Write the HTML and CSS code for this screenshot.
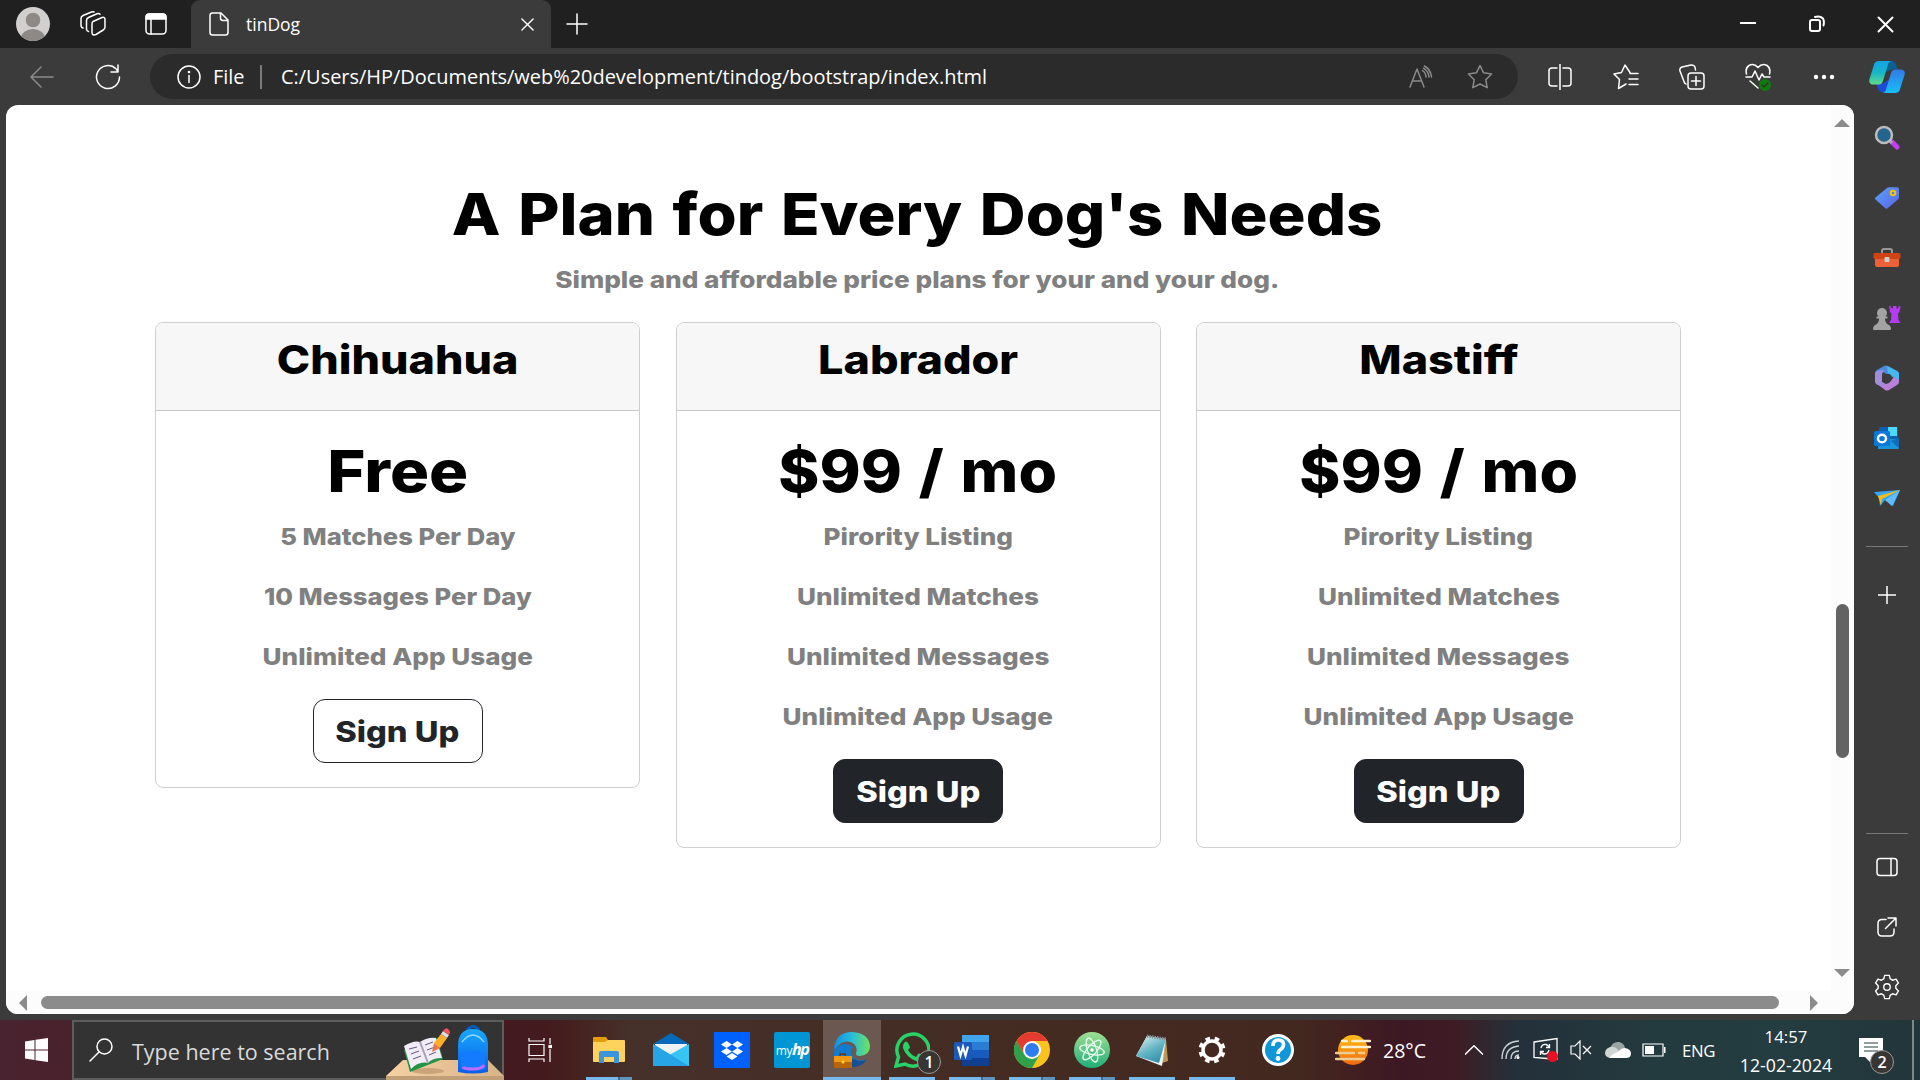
FILE: index.html
```html
<!DOCTYPE html>
<html lang="en">
<head>
<meta charset="utf-8">
<title>tinDog</title>
<link rel="stylesheet" href="styles.css">
</head>
<body>
<div class="desktop">
  <header class="tabstrip">
    <div class="cell profile"><svg width="34" height="34" viewBox="0 0 34 34"><defs><clipPath id="av"><circle cx="17" cy="17" r="17"/></clipPath></defs><circle cx="17" cy="17" r="17" fill="#d2d0ce"/><g fill="#8c8986" clip-path="url(#av)"><circle cx="17" cy="13" r="7.3"/><ellipse cx="17" cy="31" rx="12" ry="9"/></g></svg></div>
    <div class="cell spaces"><svg class="line" width="26" height="26" viewBox="0 0 26 26"><path d="M13 10.500 22 6.500q3 -.8 3 2V16q0 2-1.800 3L16 23.500q-4 1.500-4-2V13q0-2 1-2.500z"/><path d="M8.500 20.500q-2-.5-2-2.500V9.500q0-2 2-3L17 2.800q2-.6 3 .5"/><path d="M3 17q-2-.5-2-3V7.500q0-2 2-3L11.500 1q1.500-.5 2.500 0"/></svg></div>
    <div class="cell tabmenu"><svg class="line" width="22" height="22" viewBox="0 0 22 22"><rect x="1" y="1" width="20" height="20" rx="3.500"/><path d="M1 6V4q0-3 3-3h14q3 0 3 3v2z" fill="#fff"/><path d="M6 6v15"/></svg></div>
    <div class="tab">
      <svg class="line" width="20" height="24" viewBox="0 0 20 24"><path d="M3 1h9l7 7v12.500q0 2.500-2.500 2.500h-13Q1 23 1 20.500V3.500Q1 1 3.500 1M11.500 1v5q0 2.500 2.500 2.500h5"/></svg>
      <span class="tab-title">tinDog</span>
      <svg class="line" width="13" height="13" viewBox="0 0 14 14"><path d="M1 1l12 12M13 1 1 13"/></svg>
    </div>
    <div class="cell newtab"><svg class="line" width="22" height="22" viewBox="0 0 22 22"><path d="M11 1v20M1 11h20"/></svg></div>
    <div class="window-controls">
      <div class="cell"><svg width="16" height="16"><path d="M0 7h16" stroke="#fff" stroke-width="2"/></svg></div>
      <div class="cell"><svg class="line bold" width="16" height="18" viewBox="0 0 16 18"><rect x="1" y="5" width="10" height="11" rx="2"/><path d="M6 2q5-1.500 8 1.500 1.500 2.500.5 7"/></svg></div>
      <div class="cell"><svg class="line bold" width="17" height="17" viewBox="0 0 17 17"><path d="M1.500 1.500l14 14M15.500 1.500l-14 14"/></svg></div>
    </div>
  </header>

  <div class="browser">
    <div class="main">
      <nav class="toolbar">
        <div class="cell back"><svg class="line dim" width="24" height="22" viewBox="0 0 24 22"><path d="M23 11H1M11 1 1 11l10 10"/></svg></div>
        <div class="cell reload"><svg class="line" width="26" height="26" viewBox="0 0 26 26"><path d="M24.500 13A11.500 11.500 0 1 1 21 4.800L22.500 7M23 1v7h-7"/></svg></div>
        <div class="address">
          <svg class="line" width="24" height="24" viewBox="0 0 24 24"><circle cx="12" cy="12" r="11"/><path d="M12 10.500v7"/><circle cx="12" cy="7" r=".6"/></svg>
          <span class="scheme">File</span>
          <span class="url">C:/Users/HP/Documents/web%20development/tindog/bootstrap/index.html</span>
          <svg class="line dim read" width="24" height="23" viewBox="0 0 24 23"><path d="M1 22 8 4 15 22M3.500 16h9M13.500 5.500q3.500 2.500 3.500 6.500M15.500 1q6.500 4 7 11M14.500 3.200q5 3.300 5.500 8.800"/></svg>
          <svg class="line dim" width="26" height="26" viewBox="0 0 26 26"><path d="M13 1.500l3.600 7.300 8 1.200-5.800 5.700 1.400 8L13 20l-7.200 3.700 1.400-8L1.400 10l8-1.200z"/></svg>
        </div>
        <div class="tools">
          <div class="cell"><svg class="line" width="24" height="26" viewBox="0 0 24 26"><path d="M9 4H4Q1 4 1 7v12q0 3 3 3h5M15 4h5q3 0 3 3v12q0 3-3 3h-5M12 0v26"/></svg></div>
          <div class="cell"><svg class="line" width="26" height="26" viewBox="0 0 26 26"><path d="M17 8.500 12 1 8.500 8.500 1 10l5.500 5.500-1 9L13 20M17 9.500h8M16 15h9M16 20.500h9"/></svg></div>
          <div class="cell"><svg class="line" width="26" height="26" viewBox="0 0 26 26"><rect x="9" y="9" width="16" height="16" rx="3"/><path d="M17 12.500v9M12.500 17h9M7 20q-1.500-.5-2-2.500L1 7q-.8-3 2-4l9-2q3-.5 4 2l.5 3"/></svg></div>
          <div class="cell"><svg class="line" width="26" height="28" viewBox="0 0 26 28"><path d="M1.500 11Q0 5 4 2.500 9 0 13 4.500 17 0 22 2.500 26 5 24.500 11M1 14h6l3-6 4 9 3-6 2 3h6M5 18l8 7"/><circle cx="20" cy="22" r="6" fill="#0f7b0f" stroke="none"/><path d="M17 22l2 2 4-4" stroke="#29391f"/></svg></div>
          <div class="cell"><svg width="22" height="6" fill="#fff"><circle cx="3" cy="3" r="2.200"/><circle cx="11" cy="3" r="2.200"/><circle cx="19" cy="3" r="2.200"/></svg></div>
        </div>
      </nav>

      <div class="viewport">
        <div class="page">
          <section class="pricing">
            <h1><span>A Plan for Every Dog's Needs</span></h1>
            <p class="lead"><span>Simple and affordable price plans for your and your dog.</span></p>
            <div class="plans">
              <article class="card limited">
                <h2><span>Chihuahua</span></h2>
                <div class="card-body">
                  <h3><span>Free</span></h3>
                  <p><span>5 Matches Per Day</span></p>
                  <p><span>10 Messages Per Day</span></p>
                  <p><span class="wide">Unlimited App Usage</span></p>
                  <button class="outline"><span>Sign Up</span></button>
                </div>
              </article>
              <article class="card">
                <h2><span>Labrador</span></h2>
                <div class="card-body">
                  <h3><span>$99 / mo</span></h3>
                  <p><span>Pirority Listing</span></p>
                  <p><span>Unlimited Matches</span></p>
                  <p><span>Unlimited Messages</span></p>
                  <p><span>Unlimited App Usage</span></p>
                  <button><span>Sign Up</span></button>
                </div>
              </article>
              <article class="card">
                <h2><span>Mastiff</span></h2>
                <div class="card-body">
                  <h3><span>$99 / mo</span></h3>
                  <p><span>Pirority Listing</span></p>
                  <p><span>Unlimited Matches</span></p>
                  <p><span>Unlimited Messages</span></p>
                  <p><span>Unlimited App Usage</span></p>
                  <button><span>Sign Up</span></button>
                </div>
              </article>
            </div>
          </section>
        </div>
        <div class="vscroll">
          <svg width="16" height="8"><path d="M8 0l8 8H0z" fill="#8b8b8b"/></svg>
          <div class="vthumb"></div>
          <svg width="16" height="8"><path d="M0 0h16L8 8z" fill="#8b8b8b"/></svg>
        </div>
        <div class="hscroll">
          <svg width="8" height="16"><path d="M8 0v16L0 8z" fill="#8b8b8b"/></svg>
          <div class="hthumb"></div>
          <svg width="8" height="16"><path d="M0 0l8 8-8 8z" fill="#8b8b8b"/></svg>
        </div>
      </div>
    </div>

    <aside class="sidebar">
      <div class="cell copilot"><svg width="36" height="34" viewBox="0 0 36 36" preserveAspectRatio="none"><defs><linearGradient id="c1" x2="0" y2="1"><stop stop-color="#12a5e6"/><stop offset=".5" stop-color="#17b5c8"/><stop offset="1" stop-color="#5fdc87"/></linearGradient><linearGradient id="c2" x2="0" y2="1"><stop stop-color="#3379e6"/><stop offset="1" stop-color="#16bff8"/></linearGradient></defs><path d="M20 1h3q3 0 4 4l2 5h-7l-7 4z" fill="#0b5f91"/><path d="M16 34h-3q-3 0-4-4l-2-5h7l6-5z" fill="#1c4bdc"/><path d="M10 1h13q-3 0-4 4l-5 17q-1 4-4 4H5q-6 0-4.500-6L5 5q1-4 5-4z" fill="url(#c1)"/><path d="M26 35H13q3 0 4-4l5-17q1-4 4-4h5q6 0 4.500 6L31 31q-1 4-5 4z" fill="url(#c2)"/></svg></div>
      <div class="cell"><svg width="26" height="26" viewBox="0 0 26 26"><path d="M18 17l5 5" stroke="#c33df5" stroke-width="5" stroke-linecap="round"/><path d="M15 15l3 3" stroke="#aaa" stroke-width="3"/><circle cx="10" cy="10" r="8" fill="#23658d" stroke="#bcbcbc" stroke-width="2.500"/></svg></div>
      <div class="cell"><svg width="26" height="26" viewBox="0 0 26 26"><defs><linearGradient id="tg" x2="1" y2="1"><stop stop-color="#5aa2f5"/><stop offset="1" stop-color="#5a63ee"/></linearGradient></defs><path d="M13 3q1-.8 2-.8h8q2 0 2 2v8q0 1-.6 1.800L14 23q-1.500 1.500-3 0l-9-8q-2-1.500 0-3z" fill="url(#tg)"/><circle cx="19" cy="8" r="2.300" fill="none" stroke="#f3c300" stroke-width="2"/></svg></div>
      <div class="cell"><svg width="28" height="22" viewBox="0 0 28 22"><path d="M9 6V4q0-2 2-2h6q2 0 2 2v2" fill="none" stroke="#999" stroke-width="2"/><rect x="2" y="9" width="24" height="11" rx="2" fill="#ed6038"/><rect x="0.500" y="6" width="27" height="6" rx="1.500" fill="#d04414"/><rect x="11.500" y="10" width="5" height="5" rx="1" fill="#c9cfd2"/></svg></div>
      <div class="cell"><svg width="28" height="26" viewBox="0 0 28 26"><path d="M16 1l2 .5.500 2H20V1h3.500v2.500H25l.5-2 2-.5-1 6-1.500 1.500.5 6.500 2 3H16l2-3 .5-6.500L17 7z" fill="#b43bf3"/><path d="M9 3a5 5 0 0 1 3.500 8.500H14.500v2h-2.500q0 4 3 6 3 1 3 4.500 0 1-1 1H1q-1 0-1-1 0-3.500 3-4.500 3-2 3-6H3.500v-2h2A5 5 0 0 1 9 3z" fill="#a3a3a3"/></svg></div>
      <div class="cell"><svg width="26" height="26" viewBox="0 0 26 26"><path d="M14 1l9 5q2 1 2 3v8l-7-5-9-5q-2 1-3 5V20l-3-2q-2-1-2-3V8q0-2 2-3l7-4q2-.8 4 0z" fill="#4c8bdc"/><path d="M13 1l10 5q2 1 2 3v6L14 8z" fill="#46b8ef"/><path d="M1 9q0-2 2-3l7-1-2 4v8l6 3-1 5-9-5q-3-1-3-4z" fill="#a28ddc"/><path d="M25 15v2q0 2-2 3l-8 5q-2 1-4 0l-5-4 9-3 5-6z" fill="#ba80dc"/><path d="M11 9h5l2.500 4L16 17h-5l-2-4z" fill="#3b3b3b"/></svg></div>
      <div class="cell"><svg width="26" height="24" viewBox="0 0 26 24"><rect x="5" y="1" width="19" height="15" rx="1" fill="#0b62b5"/><path d="M14 1h9v9h-9z" fill="#4fd8ff"/><path d="M4 13h21v9q0 1-1 1H4z" fill="#1794dc"/><path d="M17 15l8-3v10z" fill="#0f6dbc"/><rect y="5" width="16" height="15" rx="1.500" fill="#0a78d7"/><ellipse cx="8" cy="12.500" rx="4" ry="3.800" fill="none" stroke="#fff" stroke-width="2.400"/></svg></div>
      <div class="cell"><svg width="28" height="20" viewBox="0 0 28 20"><path d="M1 4 27 2 20 18 12 12 7 18 6 10z" fill="#36a5f2"/><path d="M27 2 12 12l7 6z" fill="#60bcff"/><path d="M27 2 5 8l3 9 1-6z" fill="#f6bd17"/></svg></div>
      <div class="rule"></div>
      <div class="cell plus"><svg class="line" width="18" height="18" viewBox="0 0 18 18"><path d="M9 0v18M0 9h18"/></svg></div>
      <div class="rule low"></div>
      <div class="cell"><svg class="line" width="22" height="20" viewBox="0 0 22 20"><rect x="1" y="1.500" width="20" height="17" rx="3"/><path d="M15 1.500v17"/></svg></div>
      <div class="cell"><svg class="line" width="20" height="20" viewBox="0 0 20 20"><path d="M9 2.500H5q-4 0-4 4V15q0 4 4 4h8q4 0 4-4v-3M11 1h8v8M19 1 8.500 11.500"/></svg></div>
      <div class="cell"><svg class="line" width="26" height="26" viewBox="0 0 26 28"><path d="M10.500 1.500h5l1 3.800 2.500 1.400 3.800-1.200 2.500 4.300-2.800 2.800v2.800l2.800 2.800-2.500 4.300-3.800-1.200-2.500 1.400-1 3.800h-5l-1-3.800L7 21.300l-3.800 1.200L.7 18.200l2.800-2.800v-2.800L.7 9.800l2.500-4.300L7 6.700l2.500-1.400z"/><circle cx="13" cy="14" r="3.500"/></svg></div>
    </aside>
  </div>

  <footer class="taskbar">
    <div class="cell start"><svg width="23" height="24" viewBox="0 0 23 24" fill="#fff"><path d="M0 3.500 9.500 2v9.500H0zM10.500 1.800 23 0v11.500H10.500zM0 12.500h9.500V22L0 20.500zM10.500 12.500H23V24l-12.500-1.800z"/></svg></div>
    <div class="search">
      <svg class="line" width="24" height="24" viewBox="0 0 24 24"><circle cx="15.500" cy="8.500" r="7.500"/><path d="M10 14 1 23"/></svg>
      <span>Type here to search</span>
      <svg class="art" width="118" height="56" viewBox="0 0 118 56"><defs><linearGradient id="ds" x2="1" y2="0"><stop stop-color="#f7d0a2"/><stop offset="1" stop-color="#d7b385"/></linearGradient><linearGradient id="bp" x2="0" y2="1"><stop stop-color="#19a8ff"/><stop offset="1" stop-color="#0a5ee8"/></linearGradient></defs><path d="M17 36h85l16 16v4H0v-4z" fill="url(#ds)"/><path d="M0 52h118v4H0z" fill="#bf9f77"/><ellipse cx="42" cy="47" rx="16" ry="3" fill="#c9a37a"/><path d="M18 26 51 14l6 21-33 13z" fill="#229347"/><path d="M18 22q10-6 16-4 8-5 16-4l6 20q-10 0-14 5-9-2-17 6z" fill="#f1ecf8"/><path d="M34 18l8 21" stroke="#aaa1ba" stroke-width="2"/><path d="M23 25l8-2M25 30l8-3M27 35l8-3M39 21l8-3M41 26l8-3M43 31l7-3" stroke="#605c79"/><path d="M46 28l2-9 6 5z" fill="#ee7445"/><path d="M48 19 55 10l6 4-7 10z" fill="#ffae26"/><path d="M55 10l2-3 6 4-2 3z" fill="#dddde8"/><path d="M57 7q3-5 6-1 2 2 0 5z" fill="#f4545b"/><path d="M81 6q6-7 12 0" fill="none" stroke="#075bb8" stroke-width="3"/><path d="M72 48V22q0-17 15-17t15 17v26q-15 3-30 0z" fill="url(#bp)"/><path d="M76 18q11-14 22 0" stroke="#8ed8ff" fill="none" stroke-width="1.500"/><path d="M75 45V36q0-9 12-9t12 9v9q-12 2-24 0z" fill="#147bff"/><path d="M77 43q1 2 10 2t11-4" stroke="#c06bff" stroke-width="3" fill="none"/></svg>
    </div>
    <div class="cell taskview"><svg width="24" height="24" viewBox="0 0 24 24" fill="none" stroke="#fff" stroke-width="1.200"><path d="M1 0v3h15V0M1 24v-3h15v3M1 6.500h15v11H1zM22 0v6M22 11v13"/><rect x="21" y="7.500" width="2.500" height="2" fill="#fff"/></svg></div>
    <div class="apps">
      <div class="cell app open multi"><svg width="32" height="28" viewBox="0 0 32 28"><path d="M0 2q0-1 1-1h12l2 3v4H0z" fill="#e39c0c"/><path d="M0 6h12l3-2h16q1 0 1 1v20q0 1-1 1H1q-1 0-1-1z" fill="#fdd35e"/><path d="M6 27V17q0-2 2-2h16q2 0 2 2v10h-5v-6H11v6z" fill="#3b94dc"/></svg></div>
      <div class="cell app"><svg width="36" height="34" viewBox="0 0 36 34"><path d="M0 11 18 0l18 11z" fill="#0669b9"/><path d="M2 11h32v8L18 30 2 19z" fill="#f0f1f3"/><path d="M0 11v22h36z" fill="#29b0ef"/><path d="M36 11v22H0l18-12z" fill="#37c5f5"/><path d="M0 11l36 22H0z" fill="#27a4e6"/></svg></div>
      <div class="cell app"><svg width="36" height="36" viewBox="0 0 36 36"><path fill="#0061fe" d="M0 0h36v36H0z"/><path d="M12.500 9l5.500 3.500-5.500 3.500L7 12.500zM23.500 9l5.500 3.500-5.500 3.500-5.500-3.500zM12.500 16l5.500 3.500-5.500 3.500L7 19.500zM23.500 16l5.500 3.500-5.500 3.500-5.500-3.500zM18 21l5.500 3.500L18 28l-5.500-3.500z" fill="#fff"/></svg></div>
      <div class="cell app"><div class="myhp">my<b>hp</b></div></div>
      <div class="cell app open active"><svg width="36" height="36" viewBox="0 0 36 36"><defs><linearGradient id="ed" x2="1" y2="0"><stop stop-color="#168ee0"/><stop offset=".5" stop-color="#27bddc"/><stop offset="1" stop-color="#70e35b"/></linearGradient></defs><path d="M0 20Q-1 31 8 35q13 3 25-8-7 3-13-1-6-5-1-11-6-5-13-2-5 2-6 7z" fill="#127bd0"/><path d="M20 27q7 4 13 0-5 8-14 8-7-1-8-9z" fill="#164f93"/><path d="M0 18Q1 0 18 0q17 1 18 14 0 9-10 10-5 0-4-3 2-5-2-9Q10 5 0 18z" fill="url(#ed)"/><path d="M6 24v-2h5v2" fill="none" stroke="#68390c" stroke-width="1.500"/><path fill="#ef9812" d="M0 24h18v12H0z"/><path fill="#b86509" d="M0 30h18v6H0z"/><circle cx="9" cy="30" r="1.500" fill="#ffe14c"/></svg></div>
      <div class="cell app open"><svg width="36" height="36" viewBox="0 0 36 36"><path d="M2 34l2.500-9A16 16 0 1 1 11 32z" fill="none" stroke="#25d366" stroke-width="3.500"/><path d="M10 11q2-3 4 0l2 4q0 1-2 3 3 5 8 7l2-3q1-1 3 0l4 2q1 1-1 4-3 3-8 1Q12 25 9 16q-.5-3 1-5z" fill="#25d366"/></svg><span class="badge">1</span></div>
      <div class="cell app open multi"><svg width="36" height="32" viewBox="0 0 36 32"><path d="M8 1h27v8H8z" fill="#41a5ee"/><path d="M8 8h27v8H8z" fill="#2b7cd3"/><path d="M8 16h27v8H8z" fill="#185abd"/><path d="M8 24h27v8H8z" fill="#103f91"/><rect y="8" width="18" height="18" rx="1.500" fill="#1c59bb"/><path d="M4 12.500l2.500 9L9 13l2.500 8.500 2.500-9" fill="none" stroke="#fff" stroke-width="2.200"/></svg></div>
      <div class="cell app open multi"><svg width="36" height="36" viewBox="0 0 36 36"><circle cx="18" cy="18" r="18" fill="#fcc31e"/><path d="M2.400 9A18 18 0 0 1 33.600 9H18l-7.800 13.500z" fill="#e33b2e"/><path d="M2.400 9A18 18 0 0 0 18 36l7.800-13.500H10.200z" fill="#2da04c"/><circle cx="18" cy="18" r="9" fill="#fff"/><circle cx="18" cy="18" r="7" fill="#2f7cf0"/></svg></div>
      <div class="cell app open multi"><svg width="36" height="36" viewBox="0 0 36 36"><defs><linearGradient id="at" x2="0" y2="1"><stop stop-color="#a0df93"/><stop offset="1" stop-color="#1fae78"/></linearGradient></defs><circle cx="18" cy="18" r="18" fill="url(#at)"/><g fill="none" stroke="#e9fff0" stroke-width="1.300"><ellipse cx="18" cy="18" rx="12.500" ry="4.500" transform="rotate(12 18 18)"/><ellipse cx="18" cy="18" rx="12.500" ry="4.500" transform="rotate(72 18 18)"/><ellipse cx="18" cy="18" rx="12.500" ry="4.500" transform="rotate(132 18 18)"/></g><circle cx="18" cy="18" r="1.800" fill="#fff"/></svg></div>
      <div class="cell app open"><svg width="34" height="32" viewBox="0 0 34 32"><defs><linearGradient id="np" x2=".6" y2="1"><stop stop-color="#e7f5f5"/><stop offset=".6" stop-color="#63b4c4"/><stop offset="1" stop-color="#3793ad"/></linearGradient></defs><path d="M31 5l2 22-6 2z" fill="#bc9853"/><path d="M12 2l19 3-4 27L1 22z" fill="#f2f7f7"/><path d="M12 2l19 3-7 24L1 22z" fill="url(#np)"/><path d="M12 2l19 3" stroke="#7f9092" stroke-width="3" stroke-dasharray="1.500 1"/></svg></div>
      <div class="cell app open"><svg width="28" height="28" viewBox="-14 -14 28 28"><circle r="9" fill="none" stroke="#fff" stroke-width="3.500"/><circle r="11.500" fill="none" stroke="#fff" stroke-width="4" stroke-dasharray="4.500 4.530" transform="rotate(11.500)"/></svg></div>
    </div>
    <div class="cell help"><svg width="32" height="32" viewBox="0 0 32 32"><circle cx="16" cy="16" r="14.500" fill="#0e96d8" stroke="#fff" stroke-width="3"/><path d="M11 12q0-6 5.500-6 5 0 5 4.500 0 3-3 5-2.500 1.500-2.500 4.500" fill="none" stroke="#fff" stroke-width="3.600"/><circle cx="16" cy="24.500" r="2.400" fill="#fff"/></svg></div>
    <div class="weather"><svg width="36" height="30" viewBox="0 0 36 30"><defs><linearGradient id="wx" x2="0" y2="1"><stop stop-color="#ffbd14"/><stop offset="1" stop-color="#ee6a11"/></linearGradient></defs><circle cx="18" cy="15" r="15" fill="url(#wx)"/><path d="M7 6h5M17 6h18M7 12h28" stroke="#fff0ce" stroke-width="2.400" stroke-linecap="round"/><path d="M1 18h18M24 18h5M1 24h28" stroke="#edcb91" stroke-width="2.400" stroke-linecap="round"/></svg><span>28°C</span></div>
    <div class="tray">
      <div class="cell chevron"><svg class="line" width="18" height="10" viewBox="0 0 18 10"><path d="M0 9.500 9 .7l9 8.800"/></svg></div>
      <div class="cell wifi"><svg width="20" height="20" viewBox="0 0 20 20" fill="none" stroke="#c7d0d2" stroke-width="1.400"><path d="M1 19Q1 2 18 1M5 19Q5 7 18 6M10 19q0-8 8-8"/><path d="M14 19q0-4 4-4" /><circle cx="17" cy="17.500" r="1.500" fill="#fff" stroke="none"/></svg></div>
      <div class="cell update"><svg width="26" height="26" viewBox="0 0 26 26" fill="none" stroke="#fff" stroke-width="1.300"><path d="M1 5 24 1.500V22L14 21.500 1 20.500zM8 11q1-4 5-3.500 2 .5 3 2.500M16.500 7v3.500H13M16 13q-1 4-4.500 4-2.500 0-3.500-2.500M7.500 18v-3.500H11"/><circle cx="19.500" cy="19.500" r="5.500" fill="#e81123" stroke="none"/></svg></div>
      <div class="cell mute"><svg width="22" height="20" viewBox="0 0 22 20" fill="none" stroke="#fff" stroke-width="1.200"><path d="M1 6h4l5-5v18l-5-5H1zM13 6l8 8M21 6l-8 8"/></svg></div>
      <div class="cell cloud"><svg width="26" height="18" viewBox="0 0 26 18"><path d="M5 7Q8 0 14 1q5 1 6 6l-9 5z" fill="#9aa4a5"/><path d="M5 17q-5-1-5-5t5-6q5-1 8 3l6 8z" fill="#d0d5d5"/><path d="M4 17q4-5 9-6 3-4 7-4 6 1 6 5.500 0 4-4 4.500z" fill="#fff"/></svg></div>
      <div class="cell battery"><svg width="24" height="14" viewBox="0 0 24 14"><path d="M1 1h20v12H1z" fill="none" stroke="#fff" stroke-width="1.200"/><path d="M3 3h9v8H3zM22 4h1.500v6H22z" fill="#fff"/></svg></div>
      <span class="lang">ENG</span>
      <div class="clock"><span class="time">14:57</span><span>12-02-2024</span></div>
      <div class="cell notes"><svg width="24" height="26" viewBox="0 0 24 26"><path d="M0 1h24v19H13l-2 5-5-5H0z" fill="#fff"/><path d="M5 6h14M5 10h14M5 14h14" stroke="#263c41" stroke-width="1.200"/></svg><span class="badge">2</span></div>
      <div class="peek"></div>
    </div>
  </footer>
</div>
</body>
</html>
```
FILE: styles.css
```css
* { box-sizing: border-box; }
body { margin: 0; background: #3b3b3b; color: #fff; font-family: "Open Sans", "Noto Sans", sans-serif; }
h1, h2, h3, p { margin: 0; }
svg { display: block; flex: none; }

.desktop { width: 1920px; height: 1080px; display: flex; flex-direction: column; overflow: hidden; }
.cell { display: flex; align-items: center; justify-content: center; flex: none; }
.line { fill: none; stroke: #fff; stroke-width: 1.5; stroke-linecap: round; stroke-linejoin: round; }
.line.bold { stroke-width: 2; }
.line.dim { stroke: #8b8b8b; }

/* Tab strip */
.tabstrip { height: 48px; flex: none; display: flex; background: #202020; }
.profile { width: 66px; }
.spaces { width: 54px; }
.tabmenu { width: 71px; }
.tab { width: 360px; height: 48px; display: flex; align-items: center; gap: 17px; padding: 0 17px 0 18px; background: #3b3b3b; border-radius: 9px 9px 0 0; }
.tab-title { flex: 1; font-size: 17.500px; line-height: 24px; padding-bottom: 1px; }
.newtab { width: 52px; }
.window-controls { margin-left: auto; display: flex; }
.window-controls .cell { width: 69px; }

/* Toolbar */
.browser { flex: 1; min-height: 0; display: flex; }
.main { width: 1856px; flex: none; }
.toolbar { height: 57px; display: flex; align-items: center; }
.back { width: 84px; }
.reload { width: 48px; margin-right: 18px; }
.address { width: 1368px; height: 45px; margin-right: 8px; padding: 0 25px 0 27px; display: flex; align-items: center; background: #2b2b2b; border-radius: 23px; font-size: 19.950px; }
.scheme { width: 49px; height: 24px; line-height: 23px; margin: 0 19px 0 12px; border-right: 2px solid #7b7b7b; }
.url { flex: 1; line-height: 23px; }
.read { margin-right: 34px; }
.tools { display: flex; }
.tools .cell { width: 66px; position: relative; left: 1px; }

/* Web page */
.viewport { width: 1848px; height: 909px; margin-left: 6px; display: grid; grid-template: 886px 23px / 1825px 23px; background: #fff; border-radius: 12px; overflow: hidden; }
.vscroll { grid-row: 1; grid-column: 2; padding: 14px 0 14px 5px; background: #fcfcfc; }
.vscroll svg { margin-left: -2px; }
.vthumb { width: 13px; height: 154px; margin: 477px 0 211px; background: #636363; border-radius: 7px; }
.hscroll { grid-column: 1 / 3; display: flex; align-items: center; padding-left: 13px; background: #fcfcfc; }
.hthumb { width: 1738px; height: 13px; margin: 0 31px 0 14px; background: #8b8b8b; border-radius: 7px; }

.pricing { padding: 73px 151px 0 149px; text-align: center; font-family: "Inter", sans-serif; font-weight: 800; }
.pricing span { display: inline-block; white-space: nowrap; }
h1, h3 { color: #000; font-size: 58px; line-height: 72px; font-weight: 800; }
h1 span { transform: scaleX(1.092); word-spacing: 3.500px; }
h3 span { transform: scaleX(1.075); word-spacing: 3px; }
.limited h3 span { transform: scaleX(1.125); }
.pricing p { height: 60px; color: #808080; font-size: 23.5px; line-height: 36px; }
.pricing p span { transform: scaleX(1.11); }
.pricing p.lead { margin-top: 12px; height: 60px; }
.pricing .lead span { transform: scaleX(1.113); }
.limited p span { transform: scaleX(1.09); }
.limited p .wide { transform: scaleX(1.11); }
.plans { display: grid; grid-template-columns: repeat(3, 485px); column-gap: 35.500px; align-items: start; }
.card { border: 1px solid #cfcfcf; border-radius: 8px; overflow: hidden; }
h2 { height: 88px; padding-top: 12px; background: #f7f7f7; border-bottom: 1px solid #c8c8c8; color: #000; font-size: 40px; line-height: 50px; font-weight: 800; }
h2 span { transform: scaleX(1.122); }
.card-body { padding: 24px 20px; }
h3 { margin-bottom: 12px; }
button { display: block; width: 170px; height: 64px; margin: 0 auto; padding: 0; background: #212529; border: 1px solid #212529; border-radius: 12px; color: #fff; font: 800 28.500px "Inter", sans-serif; }
button span { transform: scaleX(1.145); }
button.outline { background: #fff; color: #212529; }

/* Browser side panel */
.sidebar { width: 64px; display: flex; flex-direction: column; align-items: center; padding-right: 2px; }
.sidebar .cell { width: 60px; height: 60px; margin-right: 1px; }
.sidebar .copilot { height: 60px; padding-bottom: 2px; }
.rule { width: 42px; height: 1px; margin: 18px 0; background: #777; flex: none; }
.rule.low { margin: 208px 0 3px; }

/* Taskbar */
.taskbar { height: 60px; flex: none; display: flex; background: linear-gradient(90deg, #4a2330 0, #431a1e 540px, #45201f 570px, #46302a 630px, #442d24 900px, #43281f 1300px, #421f20 1350px, #3c1824 1400px, #3e1c24 1455px, #24303a 1515px, #233a3e 1650px, #243d40 1780px, #22353a 1920px); }
.start { width: 72px; }
.search { position: relative; width: 432px; display: flex; align-items: center; padding-left: 15px; gap: 19px; background: #333; border: 2px solid #5d5d5d; color: #dadada; font-size: 21.500px; }
.search span { padding-top: 2px; }
.art { position: absolute; right: -2px; bottom: -2px; }
.taskview { width: 75px; padding-right: 3px; }
.apps { display: flex; }
.app { position: relative; width: 60px; }
.app:first-child { width: 62px; padding-right: 2px; }
.app:nth-child(3) { width: 61px; }
.app.open::after { content: ""; position: absolute; left: 7px; bottom: 0; width: 46px; height: 3px; background: #76b9ed; }
.app.multi::after { background: linear-gradient(90deg, #76b9ed 32px, #446987 32px 34px, #5e94be 34px); }
.app.active { width: 58px; margin: 0 1px; background: #6b5851; }
.app.active::after { left: 0; width: 58px; }
.myhp { width: 36px; height: 36px; line-height: 34px; text-align: center; border-radius: 2px; background: #0096d6; font-size: 12px; letter-spacing: -.5px; }
.myhp b { font-size: 16px; font-style: italic; letter-spacing: -1.500px; }
.badge { position: absolute; right: 1px; bottom: 6px; width: 24px; height: 24px; line-height: 22px; text-align: center; border: 1px solid #999; border-radius: 50%; background: #393533; font-size: 16px; font-weight: 600; }
.help { width: 72px; }
.weather { display: flex; align-items: center; gap: 12px; margin-left: 21px; font-size: 19.500px; }
.weather span { padding-top: 1px; }
.tray { margin-left: auto; display: flex; align-items: center; }
.tray .cell { height: 60px; }
.chevron { width: 38px; }
.wifi { width: 36px; }
.update { width: 34px; }
.mute { width: 36px; }
.cloud { width: 38px; }
.battery { width: 34px; }
.lang { width: 52px; padding-left: 11px; font-size: 16.800px; letter-spacing: -.3px; }
.clock { width: 126px; display: flex; flex-direction: column; align-items: center; padding-top: 2px; font-size: 17.700px; line-height: 28px; }
.time { font-size: 16.800px; }
.notes { position: relative; width: 44px; margin-right: 19px; }
.notes .badge { right: -1px; }
.peek { width: 2px; height: 60px; margin-right: 6px; background: #7c8788; }
```
